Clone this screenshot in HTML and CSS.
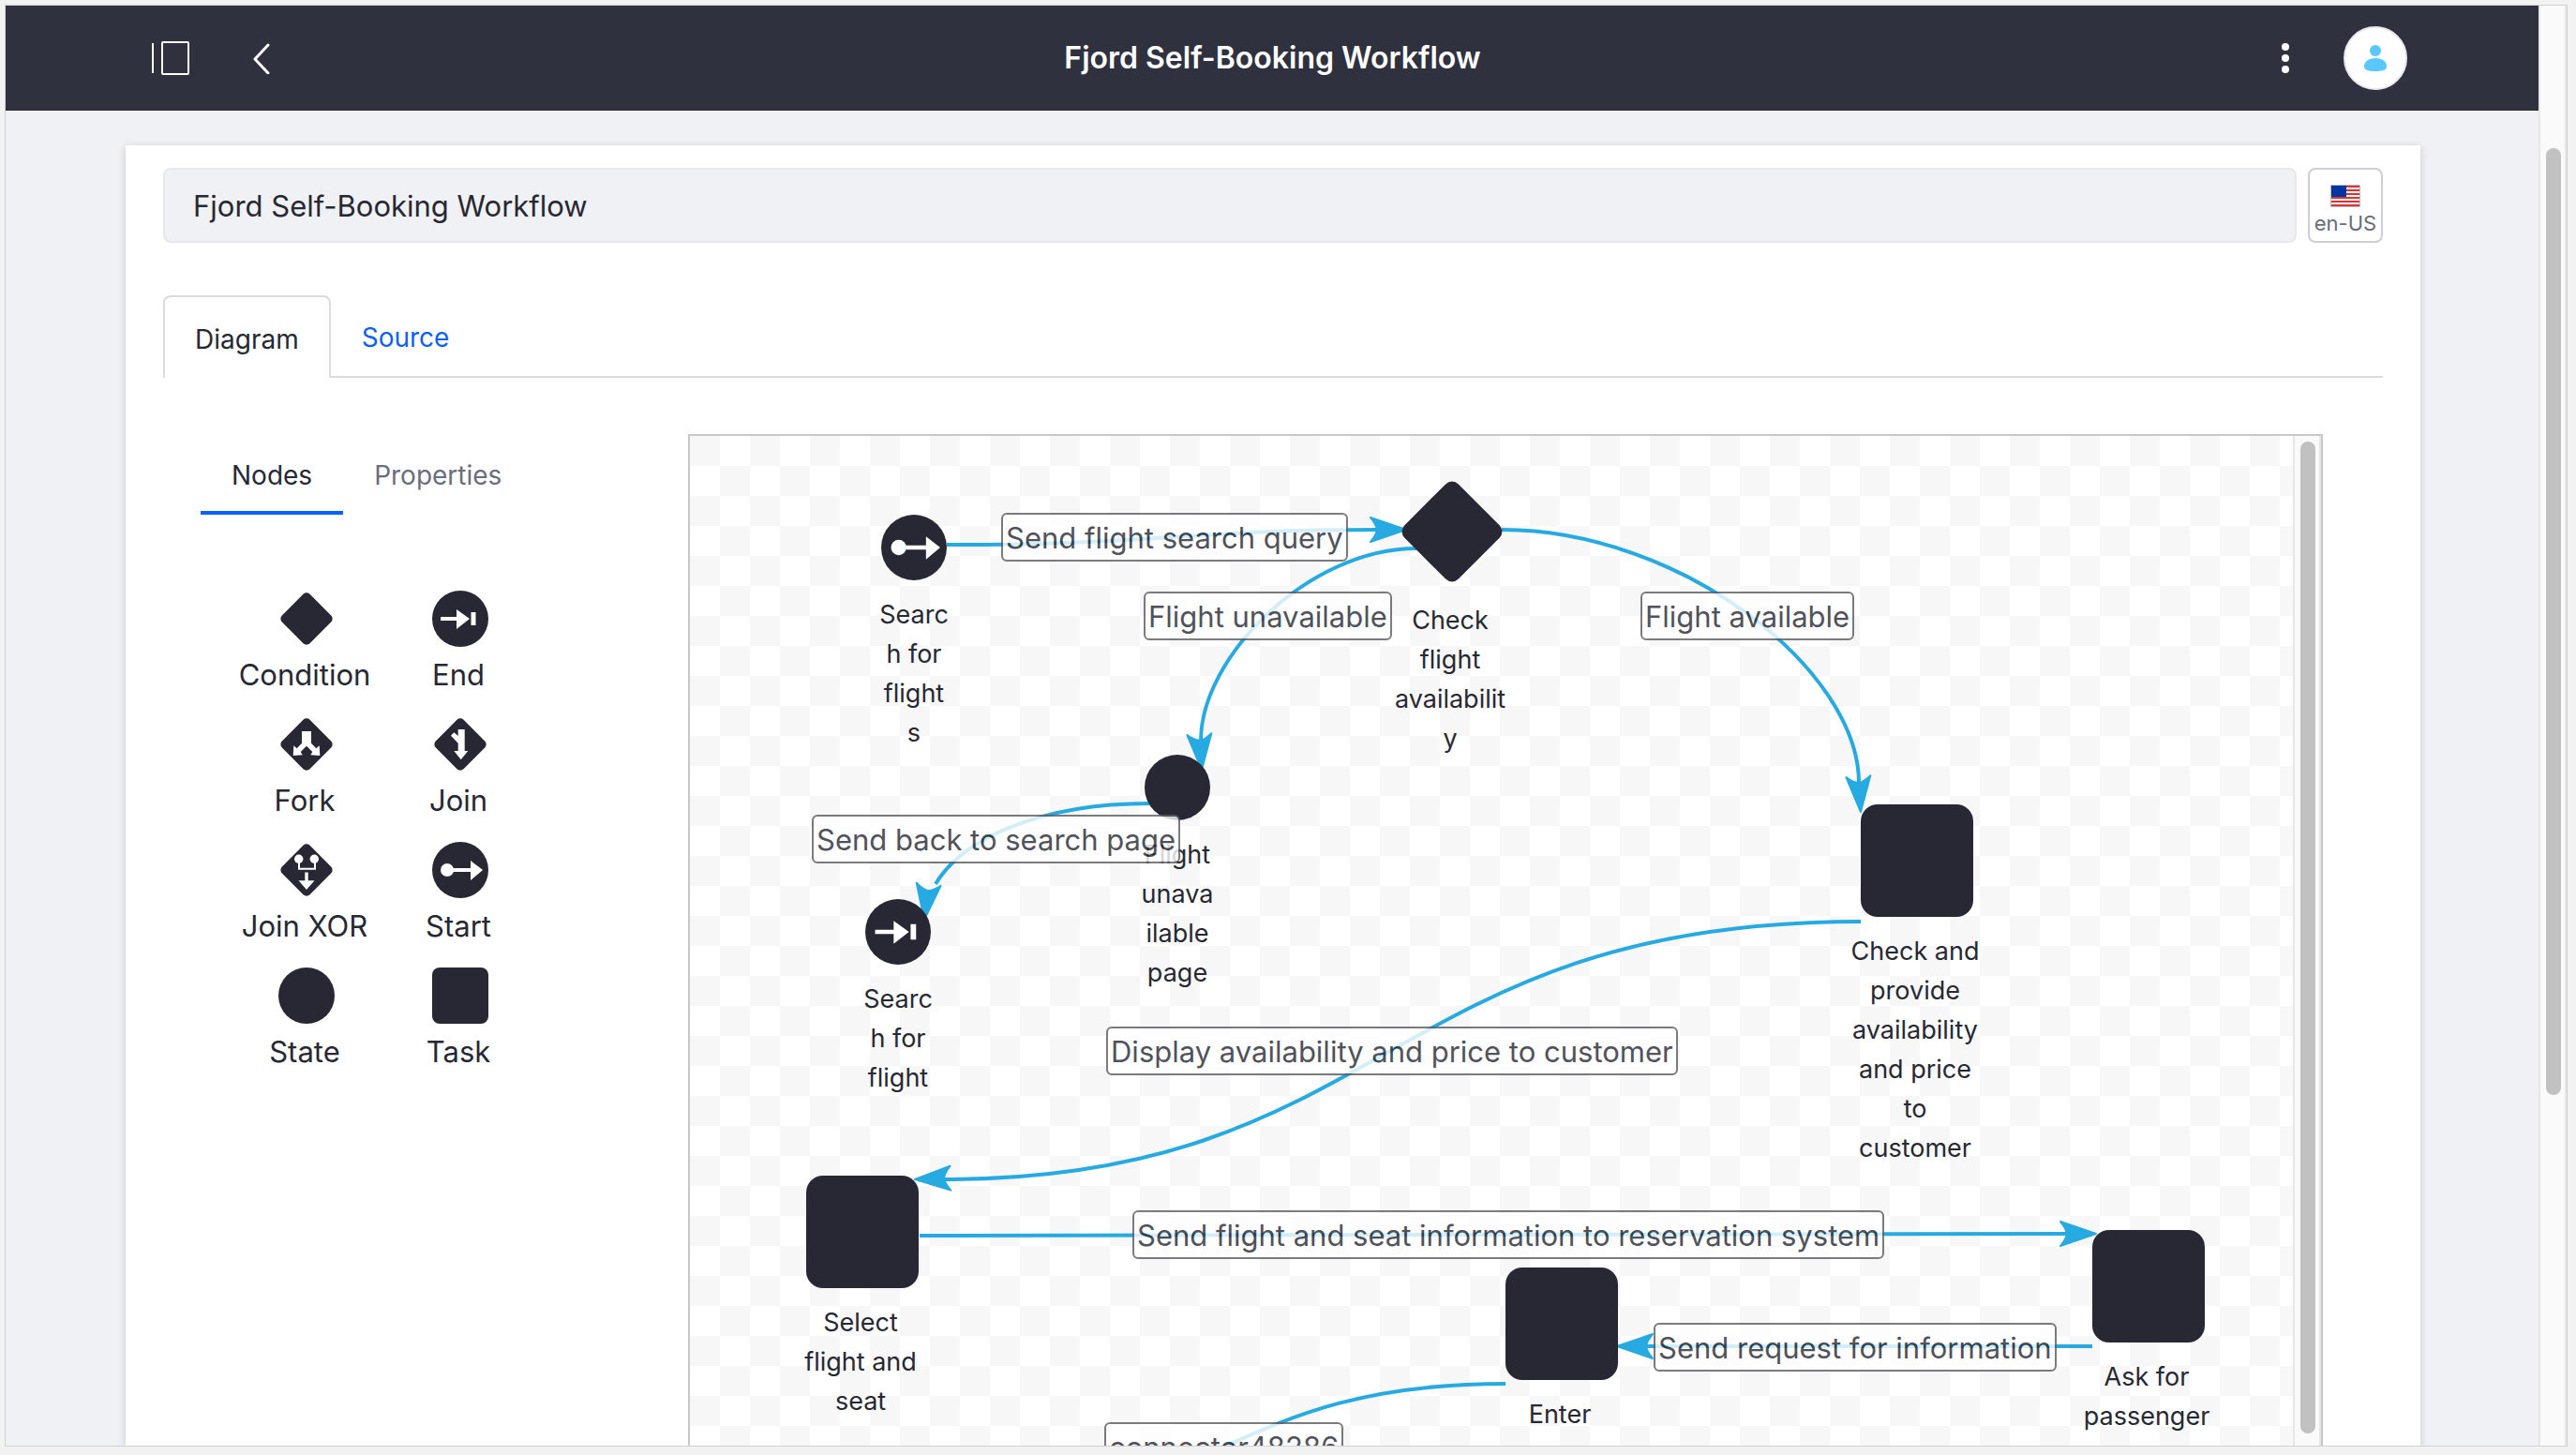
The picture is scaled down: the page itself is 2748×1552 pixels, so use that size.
FILE: index.html
```html
<!DOCTYPE html>
<html lang="en">
<head>
<meta charset="utf-8">
<title>Fjord Self-Booking Workflow</title>
<link rel="stylesheet" href="styles.css">
</head>
<body>
<div class="frame">
  <div class="page">
    <header class="topbar">
      <div class="topbar-side">
        <button class="icon-btn" aria-label="Toggle menu">
          <svg width="42" height="38" viewBox="0 0 42 38" fill="none" stroke="#fff" stroke-width="2"><path d="M2 3v32"/><rect x="12" y="2" width="28" height="34" rx="1"/></svg>
        </button>
        <button class="icon-btn back-btn" aria-label="Back">
          <svg width="20" height="34" viewBox="0 0 20 34" fill="none" stroke="#fff" stroke-width="3" stroke-linecap="round" stroke-linejoin="round"><path d="M17 3L3 18L17 33"/></svg>
        </button>
      </div>
      <h1 class="topbar-title">Fjord Self-Booking Workflow</h1>
      <div class="topbar-side topbar-end">
        <button class="icon-btn" aria-label="Options">
          <svg width="8" height="32" viewBox="0 0 8 32" fill="#fff"><circle cx="4" cy="4" r="4"/><circle cx="4" cy="16" r="4"/><circle cx="4" cy="28" r="4"/></svg>
        </button>
        <button class="avatar" aria-label="User profile">
          <svg width="24" height="28" viewBox="0 0 24 28" fill="#5ac8ff"><circle cx="12" cy="6" r="6"/><path d="M12 14c7 0 12 4 12 8.500c0 4-3 5.500-12 5.500s-12-1.500-12-5.500c0-4.500 5-8.500 12-8.500z"/></svg>
        </button>
      </div>
    </header>

    <main class="main">
      <section class="panel">
        <div class="title-row">
          <input class="title-input" type="text" aria-label="Workflow title" value="Fjord Self-Booking Workflow">
          <button class="locale-btn">
            <svg width="32" height="24" viewBox="0 0 32 24"><path fill="#fff" d="M0 0h32v24H0z"/><path stroke="#e03131" stroke-width="2" d="M1 2h30M1 6h30M1 10h30M1 14h30M1 18h30M1 22h30"/><path fill="#0035a0" d="M1 1h16v12H1z"/><path fill="none" stroke="#b4bcc8" d="M.5.5h31v23H.5z"/></svg>
            <span>en-US</span>
          </button>
        </div>

        <nav class="tabs">
          <a class="tab tab-active" href="#diagram">Diagram</a>
          <a class="tab" href="#source">Source</a>
        </nav>

        <div class="editor">
          <aside class="sidebar">
            <nav class="side-tabs">
              <a class="side-tab side-tab-active" href="#nodes">Nodes</a>
              <a class="side-tab" href="#properties">Properties</a>
            </nav>
            <ul class="palette">
              <li class="palette-item"><svg class="palette-icon" viewBox="0 0 60 60"><use href="#diamond"/></svg><span>Condition</span></li>
              <li class="palette-item"><svg class="palette-icon" viewBox="0 0 60 60"><use href="#end"/></svg><span>End</span></li>
              <li class="palette-item"><svg class="palette-icon" viewBox="0 0 60 60"><use href="#diamond"/><path fill="#fff" d="M25 16H35V28.700L40.300 34.300L43.700 31.300L44.300 42L34.300 41.300L36.300 38L30 31.700L23.700 38L25.700 41.300L15.700 42L16.300 31.300L19.700 34.300L25 28.700z"/></svg><span>Fork</span></li>
              <li class="palette-item"><svg class="palette-icon" viewBox="0 0 60 60"><use href="#diamond"/><path fill="#fff" d="M27.700 14H34.700V37H38.300L30.700 46.300L23.300 37H27.700V28.700L20 20.700L23.300 17.300L27.700 21z"/></svg><span>Join</span></li>
              <li class="palette-item"><svg class="palette-icon" viewBox="0 0 60 60"><use href="#diamond"/><g fill="#fff"><circle cx="21.700" cy="18.300" r="4.700"/><circle cx="38.300" cy="18.300" r="4.700"/><path d="M28.300 32.500H31.700V41.300H38.500L30 51L21.500 41.300H28.300z"/></g><path fill="none" stroke="#fff" stroke-width="2" d="M22 20v8.700h17V20"/></svg><span>Join XOR</span></li>
              <li class="palette-item"><svg class="palette-icon" viewBox="0 0 60 60"><use href="#start"/></svg><span>Start</span></li>
              <li class="palette-item"><svg class="palette-icon" viewBox="0 0 60 60"><circle cx="30" cy="30" r="30" fill="#272833"/></svg><span>State</span></li>
              <li class="palette-item"><svg class="palette-icon" viewBox="0 0 60 60"><rect width="60" height="60" rx="8" fill="#272833"/></svg><span>Task</span></li>
            </ul>
          </aside>

          <div class="canvas">
            <div class="canvas-view">
              <svg class="connectors" width="1710" height="1200" aria-hidden="true">
                <defs>
                  <path id="arrow" fill="#27aae1" stroke="#27aae1" stroke-width="2" stroke-linejoin="round" d="M0 0L-38 -13Q-32 -6 -31 0Q-32 6 -38 13z"/>
                  <g id="diamond"><rect x="9" y="9" width="42" height="42" rx="5" fill="#272833" transform="rotate(45 30 30)"/></g>
                  <g id="end"><circle cx="30" cy="30" r="30" fill="#272833"/><path fill="#fff" d="M9 28h17v-8l14 10-14 11v-9H9zM41.500 23h5v14h-5z"/></g>
                  <g id="start"><circle cx="30" cy="30" r="30" fill="#272833"/><path fill="#fff" d="M22 28h19v-8l13 10-13 11v-9H22z"/><circle cx="16" cy="30" r="7" fill="#fff"/></g>
                </defs>
                <g class="connector">
                  <path d="M274 116C500 116 530 100 735 100"/>
                  <path d="M775 120C660 120 545 236 545 325"/>
                  <path d="M490 392C371 392 290 431 262 478"/>
                  <path d="M866 100C1058 100 1247 250 1247 370"/>
                  <path d="M1249 518C744 518 744 793 270 793"/>
                  <path d="M245 853L1470 851"/>
                  <path d="M1496 971H1020"/>
                  <path d="M870 1011C570 1011 570 1145 270 1145"/>
                </g>
                <use href="#arrow" transform="translate(764 100)"/>
                <use href="#arrow" transform="translate(546 356) rotate(86)"/>
                <use href="#arrow" transform="translate(250 516) rotate(97)"/>
                <use href="#arrow" transform="translate(1249 401) rotate(86)"/>
                <use href="#arrow" transform="translate(240 793) rotate(178)"/>
                <use href="#arrow" transform="translate(1500 851)"/>
                <use href="#arrow" transform="translate(989 971) rotate(180)"/>
              </svg>

              <div class="node n-start"><svg width="70" height="70" viewBox="0 0 60 60"><use href="#start"/></svg><span>Searc<br>h for<br>flight<br>s</span></div>
              <div class="node node-wide n-check"><svg width="116" height="116" viewBox="0 0 60 60"><use href="#diamond"/></svg><span>Check<br>flight<br>availabilit<br>y</span></div>
              <div class="node n-unavailable"><svg width="70" height="70" viewBox="0 0 60 60"><circle cx="30" cy="30" r="30" fill="#272833"/></svg><span>Flight<br>unava<br>ilable<br>page</span></div>
              <div class="node n-end"><svg width="70" height="70" viewBox="0 0 60 60"><use href="#end"/></svg><span>Searc<br>h for<br>flight</span></div>
              <div class="node node-wide n-price"><i class="task"></i><span>Check and<br>provide<br>availability<br>and price<br>to<br>customer</span></div>
              <div class="node node-wide n-seat"><i class="task"></i><span>Select<br>flight and<br>seat</span></div>
              <div class="node node-wide n-ask"><i class="task"></i><span>Ask for<br>passenger</span></div>
              <div class="node node-wide n-enter"><i class="task"></i><span>Enter</span></div>

              <span class="label l-query">Send flight search query</span>
              <span class="label l-unavailable">Flight unavailable</span>
              <span class="label l-available">Flight available</span>
              <span class="label l-back">Send back to search page</span>
              <span class="label l-display">Display availability and price to customer</span>
              <span class="label l-reserve">Send flight and seat information to reservation system</span>
              <span class="label l-request">Send request for information</span>
              <span class="label l-connector">connector48286</span>
            </div>
            <div class="track canvas-track" aria-hidden="true"><div class="thumb"></div></div>
          </div>
        </div>
      </section>
    </main>
  </div>
  <div class="track page-track" aria-hidden="true"><div class="thumb"></div></div>
</div>
</body>
</html>
```

FILE: styles.css
```css
*, *::before, *::after { box-sizing: border-box; }

body {
  margin: 0;
  height: 100vh;
  padding: 5px 9px 9px 5px;
  background: #f2f2f2;
  color: #272833;
  font-family: Inter, "Liberation Sans", sans-serif;
  font-size: 32px;
  overflow: hidden;
}

button { font: inherit; color: inherit; border: 0; background: none; padding: 0; }
a { color: inherit; text-decoration: none; }
svg { display: block; }

.frame {
  display: flex;
  height: 100%;
  border: 1px solid #cfd2d1;
  background: #f0f1f5;
  overflow: hidden;
}

.page {
  flex: 1;
  min-width: 0;
  display: flex;
  flex-direction: column;
}

/* Top bar */
.topbar {
  flex: none;
  display: flex;
  align-items: center;
  height: 112px;
  padding: 0 140px 0 155px;
  background: #30313f;
  border-bottom: 1px solid #272833;
  color: #fff;
}
.topbar-side { flex: 1; display: flex; align-items: center; gap: 66px; }
.topbar-end { justify-content: flex-end; gap: 58px; }
.topbar-title { margin: 0 14px 0 0; font-size: 32px; font-weight: 600; line-height: 48px; }
.avatar {
  display: grid;
  place-items: center;
  width: 68px;
  height: 68px;
  border: 2px solid #e7e7ed;
  border-radius: 50%;
  background: #fff;
}

/* Panel */
.main { flex: 1; min-height: 0; display: flex; padding: 37px 126px 0 128px; }
.panel {
  flex: 1;
  min-width: 0;
  padding: 24px 40px 0;
  background: #fff;
  box-shadow: 0 2px 8px rgba(39, 40, 51, .2);
}
.title-row { display: flex; gap: 12px; }
.title-input {
  flex: 1;
  min-width: 0;
  height: 80px;
  padding: 0 30px;
  border: 2px solid #e7e7ed;
  border-radius: 8px;
  background: #f0f1f5;
  color: #272833;
  font: inherit;
  font-size: 31px;
}
.locale-btn {
  display: flex;
  flex-direction: column;
  align-items: center;
  width: 80px;
  height: 80px;
  padding-top: 16px;
  border: 2px solid #cdced9;
  border-radius: 8px;
  background: #fff;
  color: #6b6c7e;
  font-size: 22px;
  line-height: 34px;
}

.tabs {
  display: flex;
  margin-top: 56px;
  border-bottom: 2px solid #dcdcdc;
}
.tab {
  height: 86px;
  padding: 0 33px;
  color: #0b5fff;
  font-size: 28px;
  line-height: 90px;
}
.tab-active {
  height: 88px;
  margin-bottom: -2px;
  padding: 0 32px;
  border: 2px solid #dcdcdc;
  border-bottom: 0;
  border-radius: 8px 8px 0 0;
  background: #fff;
  color: #272833;
}

/* Editor */
.editor { display: flex; margin-top: 60px; padding-right: 64px; }
.sidebar { flex: none; width: 560px; padding-left: 40px; }
.side-tabs { display: flex; }
.side-tab {
  height: 86px;
  padding: 0 33px;
  color: #6b6c7e;
  font-size: 28px;
  line-height: 88px;
}
.side-tab-active { color: #272833; border-bottom: 4px solid #0b5fff; }
.palette {
  display: grid;
  grid-template-columns: 164px 164px;
  row-gap: 20px;
  margin: 81px 0 0 31px;
  padding: 0;
  list-style: none;
}
.palette-item {
  display: flex;
  flex-direction: column;
  align-items: center;
  gap: 6px;
  line-height: 48px;
  font-size: 31px;
}
.palette-item span { margin-right: 4px; }
.palette-icon { width: 60px; height: 60px; }

/* Canvas */
.canvas {
  flex: 1;
  min-width: 0;
  display: flex;
  height: 1084px;
  border: 2px solid #c8c8c8;
}
.canvas-view {
  position: relative;
  flex: 1;
  min-width: 0;
  overflow: hidden;
  background: repeating-conic-gradient(#fff 0 25%, #f7f7f7 0 50%) 0 0 / 64px 64px;
}
.connectors { position: absolute; left: 0; top: 0; }
.connector { fill: none; stroke: #27aae1; stroke-width: 4; }

.node {
  position: absolute;
  display: flex;
  flex-direction: column;
  align-items: center;
  gap: 16px;
  width: 120px;
  font-size: 27px;
  line-height: 42px;
  text-align: center;
  white-space: nowrap;
}
.node-wide span { margin-right: 4px; }
.task { width: 120px; height: 120px; border-radius: 18px; background: #272833; }
.n-start { left: 179px; top: 84px; }
.n-check { left: 753px; top: 44px; }
.n-unavailable { left: 460px; top: 340px; }
.n-end { left: 162px; top: 494px; }
.n-price { left: 1249px; top: 393px; }
.n-seat { left: 124px; top: 789px; }
.n-ask { left: 1496px; top: 847px; }
.n-enter { left: 870px; top: 887px; }

.label {
  position: absolute;
  height: 52px;
  padding: 0 3px;
  border: 2px solid #5c5c60;
  border-radius: 6px;
  background: #fff;
  opacity: .8;
  font-size: 31px;
  line-height: 50px;
  white-space: nowrap;
}
.l-query { left: 332px; top: 82px; }
.l-unavailable { left: 484px; top: 166px; }
.l-available { left: 1014px; top: 166px; }
.l-back { left: 130px; top: 404px; }
.l-display { left: 444px; top: 630px; }
.l-reserve { left: 472px; top: 826px; }
.l-request { left: 1028px; top: 946px; }
.l-connector { left: 442px; top: 1052px; }

/* Scroll tracks */
.track {
  flex: none;
  border: solid #e6e6e6;
  border-width: 0 2px;
  background: #fafafa;
}
.thumb { width: 16px; border-radius: 8px; background: #c1c1c1; }
.canvas-track { width: 30px; padding: 6px; }
.canvas-track .thumb { height: 1058px; }
.page-track { width: 30px; padding: 152px 6px 374px; }
.page-track .thumb { height: 100%; }
```
